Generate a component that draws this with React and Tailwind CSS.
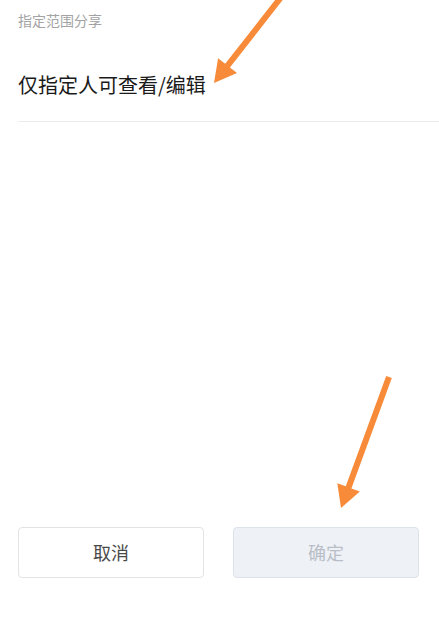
import React from "react";

const arrowPoints = (x1, y1, x2, y2, w = 6, headLen = 22, headW = 24) => {
  const dx = x2 - x1;
  const dy = y2 - y1;
  const len = Math.hypot(dx, dy);
  const ux = dx / len;
  const uy = dy / len;
  const nx = -uy;
  const ny = ux;
  const bx = x2 - ux * headLen;
  const by = y2 - uy * headLen;
  const pts = [
    [x1 + nx * w / 2, y1 + ny * w / 2],
    [bx + nx * w / 2, by + ny * w / 2],
    [bx + nx * headW / 2, by + ny * headW / 2],
    [x2, y2],
    [bx - nx * headW / 2, by - ny * headW / 2],
    [bx - nx * w / 2, by - ny * w / 2],
    [x1 - nx * w / 2, y1 - ny * w / 2],
  ];
  return pts.map((p) => p.join(",")).join(" ");
};

const Arrows = () => (
  <svg
    className="absolute inset-0 pointer-events-none"
    width="439"
    height="627"
    viewBox="0 0 439 627"
  >
    <polygon points={arrowPoints(282, -4, 214, 83)} fill="#f78b39" />
    <polygon points={arrowPoints(389, 377, 341, 508)} fill="#f78b39" />
  </svg>
);

const App = () => {
  return (
    <div
      className="relative w-[439px] h-[627px] bg-white flex flex-col overflow-hidden"
      style={{ fontFamily: '"Noto Sans CJK SC", "Noto Sans", sans-serif' }}
    >
      <div className="pl-[18px]">
        <p className="pt-[10px] text-[14px] leading-[20px] text-[#a3a3a3]">
          指定范围分享
        </p>
        <div className="mt-[40px] h-[52px] border-b border-[#ececec] flex items-start">
          <span className="text-[20px] leading-[30px] text-[#1a1a1a]">
            仅指定人可查看/编辑
          </span>
        </div>
      </div>

      <div className="flex-1" />

      <div className="flex gap-[29px] px-[18px] mb-[49px]">
        <button className="w-[186px] h-[51px] rounded-[4px] border border-[#e3e3e3] bg-white text-[18px] text-[#4a4a4a]">
          取消
        </button>
        <button className="w-[186px] h-[51px] rounded-[4px] border border-[#dde2ea] bg-[#eef1f6] text-[18px] text-[#b9bec6]">
          确定
        </button>
      </div>

      <Arrows />
    </div>
  );
};

export default App;
